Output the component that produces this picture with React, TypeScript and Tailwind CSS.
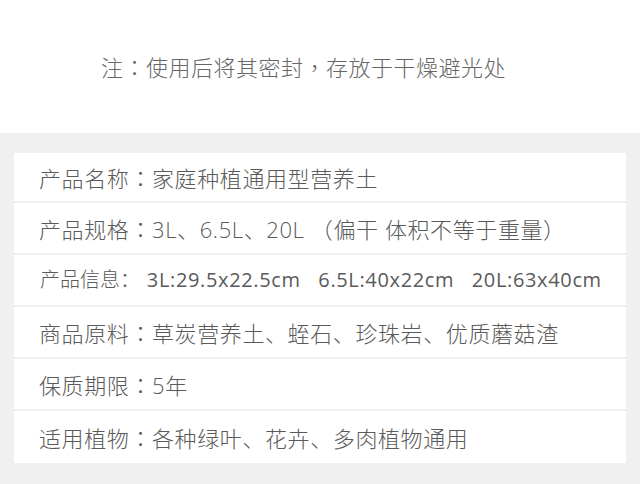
import React from 'react'

const rows: { label: string; value: string; small?: boolean }[] = [
  { label: '产品名称', value: '家庭种植通用型营养土' },
  { label: '产品规格', value: '3L、6.5L、20L （偏干 体积不等于重量）' },
  { label: '产品信息', value: '3L:29.5x22.5cm   6.5L:40x22cm   20L:63x40cm', small: true },
  { label: '商品原料', value: '草炭营养土、蛭石、珍珠岩、优质蘑菇渣' },
  { label: '保质期限', value: '5年' },
  { label: '适用植物', value: '各种绿叶、花卉、多肉植物通用' },
]

const tcColon = { fontFamily: '"Noto Sans CJK TC", sans-serif' }

export default function App() {
  return (
    <div
      className="w-[640px] h-[484px] overflow-hidden bg-white text-[#5a5a5a] font-light"
      style={{ fontFamily: '"Open Sans", "Noto Sans CJK SC", sans-serif' }}
    >
      <div className="h-[133px] flex items-center pl-[101px]">
        <p className="text-[22px] leading-none tracking-[0.5px] text-[#666] whitespace-pre">
          注<span style={tcColon}>：</span>使用后将其密封<span style={tcColon}>，</span>存放于干燥避光处
        </p>
      </div>
      <div className="h-[351px] bg-[#f0f0f0] pt-[20px] px-[14px]">
        <div className="bg-white flex flex-col divide-y-2 divide-[#f0f0f0]">
          {rows.map((r) => (
            <div key={r.label} className="h-[52px] first:h-[50px] flex items-center px-[25px]">
              {r.small ? (
                <span className="text-[20px] leading-none whitespace-pre pl-[1px]">
                  {r.label}：
                  <span className="font-normal tracking-[0.65px] pl-[1px]">{' ' + r.value}</span>
                </span>
              ) : (
                <span className="text-[22px] leading-none tracking-[0.6px] whitespace-pre">
                  {r.label}
                  <span style={tcColon}>：</span>
                  {r.value}
                </span>
              )}
            </div>
          ))}
        </div>
      </div>
    </div>
  )
}
